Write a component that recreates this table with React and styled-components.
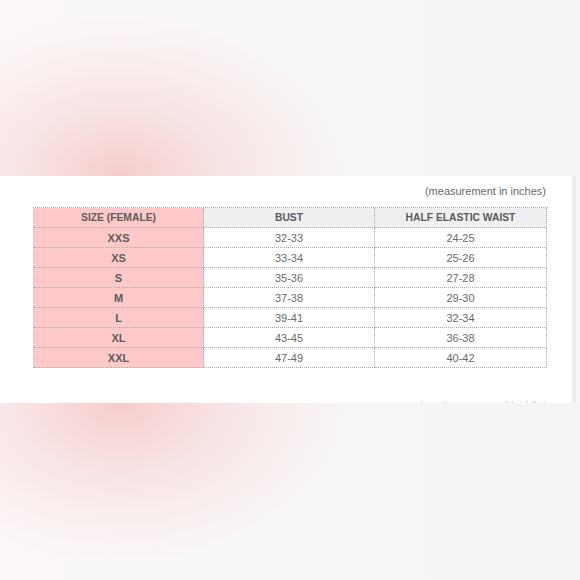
import React from "react";
import styled, { createGlobalStyle } from "styled-components";

const GlobalStyle = createGlobalStyle`
	html, body {
		margin: 0;
		padding: 0;
		width: 580px;
		height: 580px;
		overflow: hidden;
		background: #f6f6f6;
		font-family: "Liberation Sans", Arial, sans-serif;
	}
`;

const rows = [
	["XXS", "32-33", "24-25"],
	["XS", "33-34", "25-26"],
	["S", "35-36", "27-28"],
	["M", "37-38", "29-30"],
	["L", "39-41", "32-34"],
	["XL", "43-45", "36-38"],
	["XXL", "47-49", "40-42"],
];

export default function App() {
	return (
		<Page>
			<GlobalStyle />
			<Blur edge="bottom" height={176} />
			<Panel>
				<Sheet>
					<Caption>(measurement in inches)</Caption>
					<Chart>
						<Cell size head>SIZE (FEMALE)</Cell>
						<Cell head>BUST</Cell>
						<Cell head>HALF ELASTIC WAIST</Cell>
						{rows.map((r) => (
							<React.Fragment key={r[0]}>
								<Cell size>{r[0]}</Cell>
								<Cell>{r[1]}</Cell>
								<Cell>{r[2]}</Cell>
							</React.Fragment>
						))}
					</Chart>
					<Footnote>lengths measured laid flat</Footnote>
				</Sheet>
				<Strip />
			</Panel>
			<Blur edge="top" height={177} />
		</Page>
	);
}

const Page = styled.div`
	display: flex;
	flex-direction: column;
	width: 580px;
	height: 580px;
`;

const Blur = styled.div`
	height: ${(p) => p.height}px;
	flex-shrink: 0;
	background:
		radial-gradient(ellipse 230px 160px at 120px ${(p) => (p.edge === "bottom" ? "100%" : "0%")},
			rgba(245, 200, 200, 0.9) 0%,
			rgba(247, 214, 214, 0.55) 45%,
			rgba(250, 235, 235, 0) 100%),
		linear-gradient(to right, #fcf8f8 0%, #f8f6f6 45%, #f5f5f5 100%);
`;

const Panel = styled.div`
	display: flex;
	flex-direction: row;
	height: 227px;
	flex-shrink: 0;
	background: #f6f6f6;
`;

const Sheet = styled.div`
	display: flex;
	flex-direction: column;
	width: 572px;
	height: 227px;
	box-sizing: border-box;
	padding: 8px 26px 0 33px;
	background: #ffffff;
	overflow: hidden;
`;

const Strip = styled.div`
	width: 4px;
	background: #ececec;
`;

const Caption = styled.div`
	height: 15px;
	line-height: 15px;
	margin-bottom: 8px;
	text-align: right;
	font-size: 11px;
	color: #6a6a6a;
`;

const Chart = styled.div`
	display: grid;
	grid-template-columns: 170px 171px 172px;
	grid-auto-rows: 20px;
	border-top: 1px dotted #ababab;
	border-left: 1px dotted #ababab;
	width: 514px;
`;

const Cell = styled.div`
	display: flex;
	align-items: center;
	justify-content: center;
	box-sizing: border-box;
	border-right: 1px dotted #ababab;
	border-bottom: 1px dotted #ababab;
	font-size: ${(p) => (p.head ? "10.3px" : "11px")};
	font-weight: ${(p) => (p.size || p.head ? "bold" : "normal")};
	color: ${(p) => (p.size || p.head ? "#5c5c5c" : "#6a6a6a")};
	background: ${(p) => (p.size ? "#ffc9c9" : p.head ? "#efefef" : "#ffffff")};
`;

const Footnote = styled.div`
	margin-top: 30px;
	text-align: right;
	font-size: 11px;
	color: #cfcfcf;
	line-height: 14px;
`;
